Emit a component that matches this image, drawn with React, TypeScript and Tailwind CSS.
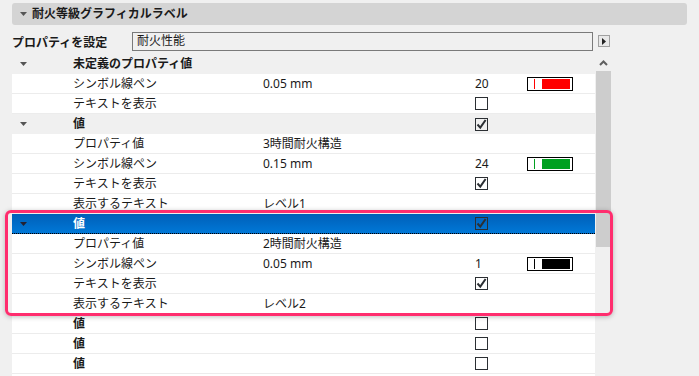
import React from 'react';

type Row = {
  kind: 'group' | 'item' | 'plain';
  label: string;
  value?: string;
  num?: string;
  check?: boolean;
  pen?: string;
  shade?: boolean;
  selected?: boolean;
};

const rows: Row[] = [
  { kind: 'group', label: '未定義のプロパティ値', shade: true },
  { kind: 'item', label: 'シンボル線ペン', value: '0.05 mm', num: '20', pen: '#ff0000' },
  { kind: 'item', label: 'テキストを表示', check: false },
  { kind: 'group', label: '値', check: true, shade: true },
  { kind: 'item', label: 'プロパティ値', value: '3時間耐火構造' },
  { kind: 'item', label: 'シンボル線ペン', value: '0.15 mm', num: '24', pen: '#00a020' },
  { kind: 'item', label: 'テキストを表示', check: true },
  { kind: 'item', label: '表示するテキスト', value: 'レベル1' },
  { kind: 'group', label: '値', check: true, selected: true },
  { kind: 'item', label: 'プロパティ値', value: '2時間耐火構造' },
  { kind: 'item', label: 'シンボル線ペン', value: '0.05 mm', num: '1', pen: '#000000' },
  { kind: 'item', label: 'テキストを表示', check: true },
  { kind: 'item', label: '表示するテキスト', value: 'レベル2' },
  { kind: 'plain', label: '値', check: false },
  { kind: 'plain', label: '値', check: false },
  { kind: 'plain', label: '値', check: false },
  { kind: 'plain', label: '', },
];

function Triangle({ className = 'fill-[#555]' }: { className?: string }) {
  return (
    <svg width="7" height="4" viewBox="0 0 7 4" className={className}>
      <polygon points="0,0 7,0 3.5,4" />
    </svg>
  );
}

function Check({ on }: { on: boolean }) {
  return (
    <div className="w-[13px] h-[13px] border border-[#2b2f33] flex items-center justify-center">
      {on && (
        <svg width="11" height="11" viewBox="0 0 11 11">
          <path d="M1.5 5.5 L4.3 8.6 L9.6 1" stroke="#2b2f33" strokeWidth="2" fill="none" />
        </svg>
      )}
    </div>
  );
}

function Pen({ color }: { color: string }) {
  return (
    <div className="w-[46px] h-[14px] border border-black bg-white flex items-center">
      <div className="ml-[6px] w-px h-[10px]" style={{ background: color }} />
      <div className="ml-[7px] w-[28px] h-[10px]" style={{ background: color }} />
    </div>
  );
}

function TableRow({ row }: { row: Row }) {
  const bg = row.selected
    ? 'bg-gradient-to-b from-[#005fb8] to-[#0078d7] border-b border-dotted border-black text-white'
    : row.shade
    ? 'bg-[#f0f0f0] text-[#1a1a1a]'
    : 'bg-white border-b border-[#ececec] text-[#1a1a1a]';
  return (
    <div className={`grid grid-cols-[61px_189px_213px_52px_1fr] h-[20px] items-center ${bg}`}>
      <div className="pl-[8px] flex items-center">
        {row.kind === 'group' && <Triangle className={row.selected ? 'fill-[#223]' : 'fill-[#555]'} />}
      </div>
      <div className={row.kind === 'item' ? '' : 'font-bold'}>{row.label}</div>
      <div className="pl-[1px]">{row.value}</div>
      <div className="flex items-center">
        {row.num !== undefined && <span>{row.num}</span>}
        {row.check !== undefined && <Check on={row.check} />}
      </div>
      <div className="flex items-center">{row.pen && <Pen color={row.pen} />}</div>
    </div>
  );
}

export default function App() {
  return (
    <div
      className="w-[699px] h-[376px] bg-[#f0f0f0] overflow-hidden text-[12px] text-[#1a1a1a] flex flex-col"
      style={{ fontFamily: '"Noto Sans", "Noto Sans CJK JP", sans-serif' }}
    >
      <div className="mx-[12px] mt-[3px] h-[22px] rounded-[3px] bg-[#d4d4d4] flex items-center pl-[8px] gap-[5px] shrink-0">
        <Triangle />
        <span className="font-bold">耐火等級グラフィカルラベル</span>
      </div>

      <div className="h-[29px] flex items-center pl-[12px] shrink-0">
        <span className="w-[120px] font-bold mt-[6px]">プロパティを設定</span>
        <div className="ml-[0px] mt-[3px] w-[461px] h-[19px] border border-[#7a7a7a] bg-[#f0f0f0] flex items-center pl-[4px]">
          耐火性能
        </div>
        <div className="ml-[5px] mt-[3px] w-[12px] h-[12px] border border-[#a0a0a0] bg-[#e8e8e8] flex items-center justify-center">
          <svg width="4" height="7" viewBox="0 0 4 7">
            <polygon points="0,0 4,3.5 0,7" fill="#222" />
          </svg>
        </div>
      </div>

      <div className="relative flex pl-[12px] flex-1">
        <div className="w-[583px] flex flex-col">
          {rows.map((r, i) => (
            <TableRow key={i} row={r} />
          ))}
        </div>
        <div className="ml-[1px] w-[15px] flex flex-col">
          <div className="h-[17px] flex items-center justify-center">
            <svg width="9" height="6" viewBox="0 0 9 6">
              <path d="M1 5 L4.5 1.5 L8 5" stroke="#606060" strokeWidth="2" fill="none" />
            </svg>
          </div>
          <div className="h-[176px] bg-[#cdcdcd]" />
        </div>

        <div className="absolute left-[5px] top-[156px] w-[608px] h-[106px] rounded-[6px] border-[3.5px] border-[#ff2d6e] shadow-[0_1px_5px_rgba(0,0,0,0.25)] pointer-events-none" />
      </div>
    </div>
  );
}
